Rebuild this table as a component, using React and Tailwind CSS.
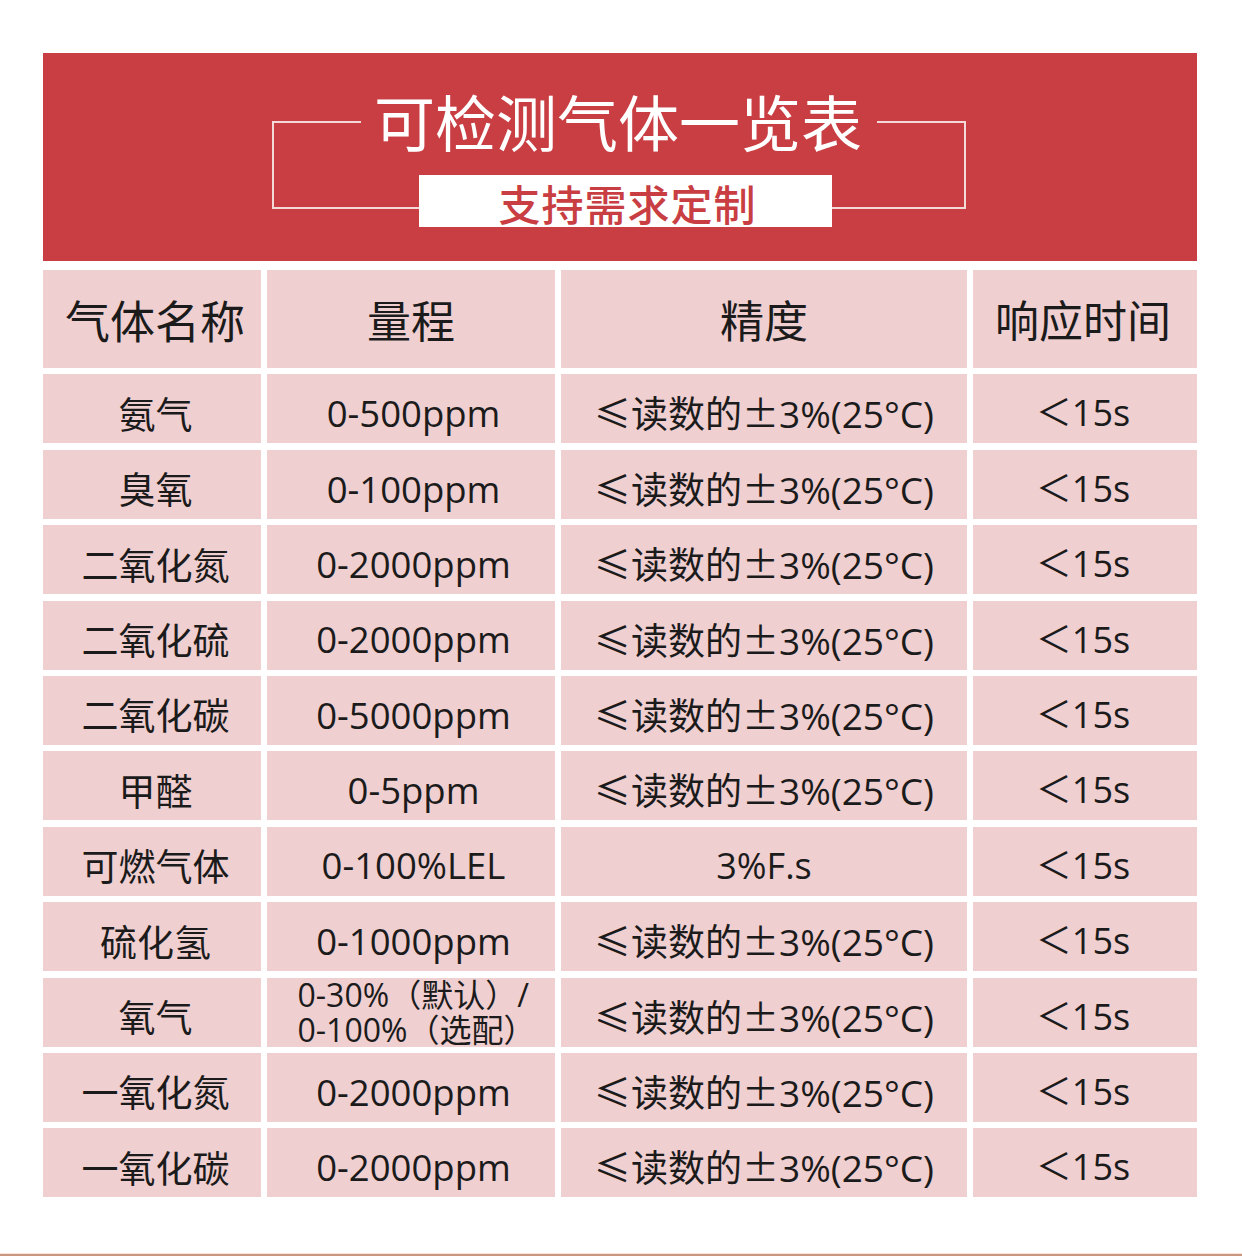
import React from "react";

const rows = [
  ["氨气", "0-500ppm", "p", "＜15s"],
  ["臭氧", "0-100ppm", "p", "＜15s"],
  ["二氧化氮", "0-2000ppm", "p", "＜15s"],
  ["二氧化硫", "0-2000ppm", "p", "＜15s"],
  ["二氧化碳", "0-5000ppm", "p", "＜15s"],
  ["甲醛", "0-5ppm", "p", "＜15s"],
  ["可燃气体", "0-100%LEL", "3%F.s", "＜15s"],
  ["硫化氢", "0-1000ppm", "p", "＜15s"],
  ["氧气", "o2", "p", "＜15s"],
  ["一氧化氮", "0-2000ppm", "p", "＜15s"],
  ["一氧化碳", "0-2000ppm", "p", "＜15s"],
];

function Precision() {
  return (
    <span className="text-[37px]">
      <span className="font-['Noto_Sans_CJK_SC',sans-serif]">≤读数的±</span>3%(25°C)
    </span>
  );
}

function Cell({ children, extra = "" }) {
  return (
    <div
      className={`bg-[#f0cfd1] flex items-center justify-center pt-[9px] text-[36px] leading-none text-[#1b1b1b] whitespace-nowrap ${extra}`}
    >
      {children}
    </div>
  );
}

export default function App() {
  return (
    <div className="w-[1242px] h-[1256px] bg-white flex flex-col font-['Open_Sans','Noto_Sans_CJK_SC',sans-serif]">
      <div className="ml-[43px] mt-[53px] w-[1154px]">
        <div className="h-[208px] bg-[#c93e43] flex justify-center">
          <div className="relative mt-[68px] ml-[-2px] w-[694px] h-[88px] border-2 border-[#f4d9d9]">
            <div className="absolute left-0 right-0 top-[-33px] flex justify-center">
              <span className="bg-[#c93e43] px-[15px] text-[61px] leading-none text-white font-['Noto_Sans_CJK_SC',sans-serif] pl-[13px]">
                可检测气体一览表
              </span>
            </div>
            <div className="absolute left-[145px] top-[52px] w-[413px] h-[52px] bg-white flex items-center justify-center pt-[3px] pl-[4px]">
              <span className="text-[42px] leading-none text-[#c93e43] font-medium tracking-[1px] font-['Noto_Sans_CJK_SC',sans-serif]">
                支持需求定制
              </span>
            </div>
          </div>
        </div>
        <div className="mt-[9px] grid grid-cols-[218px_288px_406px_224px] grid-rows-[98px_repeat(11,69px)] gap-x-[6px] gap-y-[6.4px]">
          {["气体名称", "量程", "精度", "响应时间"].map((h, i) => (
            <div
              key={h}
              className={`bg-[#f0cfd1] flex items-center justify-center text-[44px] leading-none text-[#1b1b1b] font-['Noto_Sans_CJK_SC',sans-serif] ${
                i === 0 ? "pl-[6px] text-[45px]" : i === 3 ? "pr-[4px]" : ""
              }`}
            >
              {h}
            </div>
          ))}
          {rows.map((r, i) => (
            <React.Fragment key={i}>
              <Cell extra="pl-[7px]">
                <span className="font-['Noto_Sans_CJK_SC',sans-serif] text-[37px]">{r[0]}</span>
              </Cell>
              <Cell extra="pl-[5px]">
                {r[1] === "o2" ? (
                  <div className="text-[32px] leading-[35px] text-left pl-[6px] -mt-[10px]">
                    <div>0-30%（默认）/</div>
                    <div>0-100%（选配）</div>
                  </div>
                ) : (
                  <span className="text-[36.5px]">{r[1]}</span>
                )}
              </Cell>
              <Cell>{r[2] === "p" ? <Precision /> : r[2]}</Cell>
              <Cell extra="pr-[4px]">{r[3]}</Cell>
            </React.Fragment>
          ))}
        </div>
      </div>
      <div className="mt-auto h-[1px] bg-[#fbe3d8]" />
      <div className="h-[2px] bg-[#c9977f]" />
    </div>
  );
}
